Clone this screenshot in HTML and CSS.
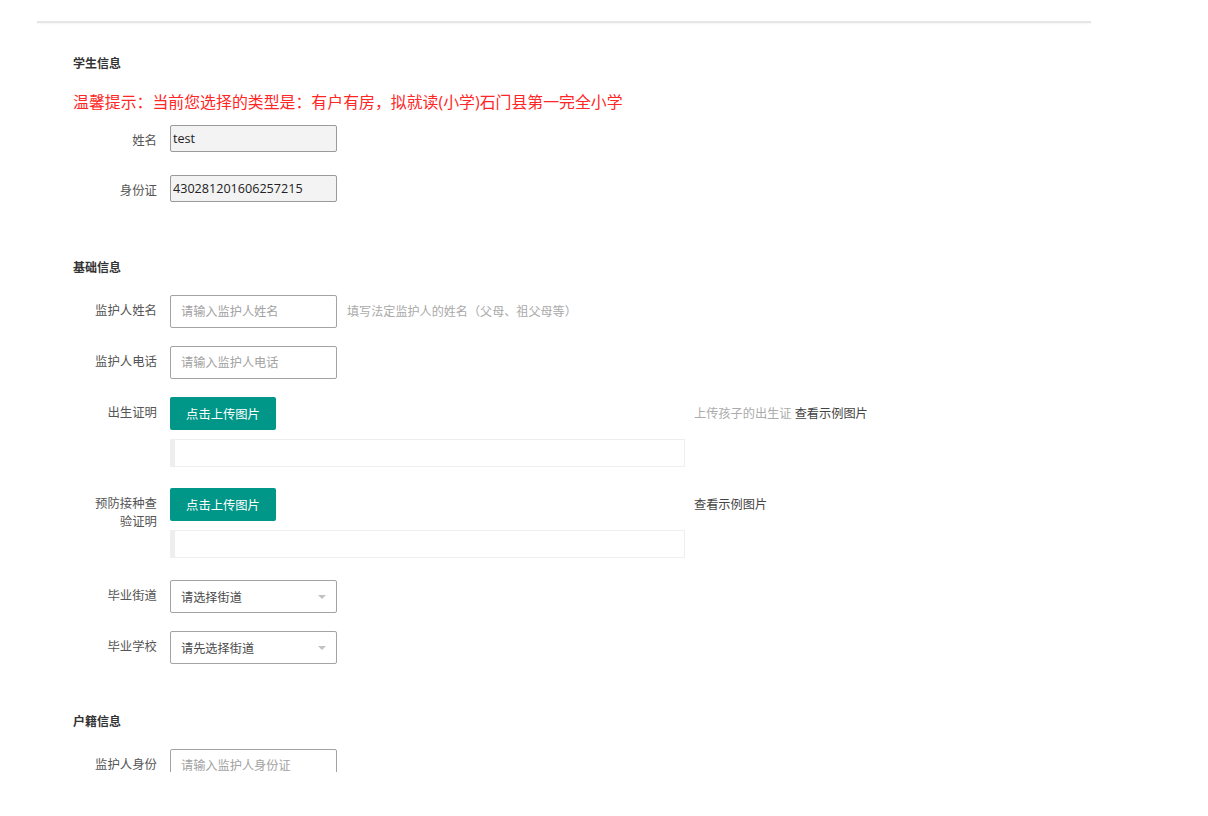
FILE: index.html
```html
<!DOCTYPE html>
<html lang="zh-CN">
<head>
<meta charset="utf-8">
<title>学生信息</title>
<link rel="stylesheet" href="styles.css">
</head>
<body>
<div class="panel">
  <div class="section-title">学生信息</div>
  <div class="tip">温馨提示：当前您选择的类型是：有户有房，拟就读(小学)石门县第一完全小学</div>

  <div class="row row-ro first-ro">
    <label class="lbl lbl-ro">姓名</label>
    <input class="ro-input" type="text" value="test" readonly>
  </div>
  <div class="row row-ro second-ro">
    <label class="lbl lbl-ro">身份证</label>
    <input class="ro-input" type="text" value="430281201606257215" readonly>
  </div>

  <div class="section-title gap-big">基础信息</div>

  <div class="row after-title">
    <label class="lbl">监护人姓名</label>
    <input class="text-input" type="text" placeholder="请输入监护人姓名">
    <span class="aux">填写法定监护人的姓名（父母、祖父母等）</span>
  </div>
  <div class="row gap-18">
    <label class="lbl">监护人电话</label>
    <input class="text-input" type="text" placeholder="请输入监护人电话">
  </div>

  <div class="row gap-18">
    <label class="lbl">出生证明</label>
    <div class="upload">
      <button class="upload-btn" type="button">点击上传图片</button>
      <div class="upload-list"></div>
    </div>
    <span class="upload-aux"><span class="muted">上传孩子的出生证</span> <span class="link">查看示例图片</span></span>
  </div>

  <div class="row gap-21">
    <label class="lbl">预防接种查验证明</label>
    <div class="upload">
      <button class="upload-btn" type="button">点击上传图片</button>
      <div class="upload-list"></div>
    </div>
    <span class="upload-aux"><span class="link">查看示例图片</span></span>
  </div>

  <div class="row gap-22">
    <label class="lbl">毕业街道</label>
    <div class="select"><span>请选择街道</span><i class="caret"></i></div>
  </div>
  <div class="row gap-18">
    <label class="lbl">毕业学校</label>
    <div class="select"><span>请先选择街道</span><i class="caret"></i></div>
  </div>

  <div class="section-title gap-48">户籍信息</div>

  <div class="row after-title">
    <label class="lbl">监护人身份</label>
    <input class="text-input" type="text" placeholder="请输入监护人身份证">
  </div>
</div>
</body>
</html>
```

FILE: styles.css
```css
html, body {
  margin: 0;
  padding: 0;
  background: #ffffff;
}

body {
  font-family: "Open Sans", "Noto Sans CJK SC", sans-serif;
  color: #333;
}

.panel {
  position: relative;
  box-sizing: border-box;
  margin: 21px 0 0 37px;
  width: 1054px;
  height: 751px;
  overflow: hidden;
  border-top: 2px solid #e6e6e6;
  padding: 31px 0 0 36px;
}

.panel::before {
  content: "";
  position: absolute;
  left: 0;
  right: 0;
  top: 0;
  height: 2px;
  background: linear-gradient(#f4f4f4, rgba(255, 255, 255, 0));
}

.section-title {
  height: 20px;
  line-height: 20px;
  font-size: 12px;
  font-weight: bold;
  color: #333;
}

.gap-big { margin-top: 56px; }
.gap-48 { margin-top: 48px; }

.tip {
  margin-top: 16px;
  line-height: 24px;
  height: 24px;
  font-size: 15.9px;
  color: #ff2626;
  white-space: nowrap;
}

.row {
  display: flex;
  align-items: flex-start;
}

.first-ro { margin-top: 11px; }
.second-ro { margin-top: 23px; }
.after-title { margin-top: 17px; }
.gap-18 { margin-top: 18px; }
.gap-21 { margin-top: 21px; }
.gap-22 { margin-top: 22px; }

.lbl {
  box-sizing: border-box;
  flex: 0 0 97px;
  width: 97px;
  padding: 7px 13px 0 15px;
  text-align: right;
  font-size: 12.4px;
  line-height: 18px;
  color: #555;
}

.lbl-ro {
  padding-top: 7px;
}

.ro-input {
  box-sizing: border-box;
  width: 167px;
  height: 27px;
  margin: 0;
  padding: 0 2px;
  border: 1px solid #9a9a9a;
  border-radius: 2px;
  background: #f3f3f3;
  font-family: "Open Sans", "Noto Sans CJK SC", sans-serif;
  font-size: 12.6px;
  color: #222;
  outline: none;
}

.text-input {
  box-sizing: border-box;
  width: 167px;
  height: 33px;
  margin: 0;
  padding: 0 10px;
  border: 1px solid #a3a3a3;
  border-radius: 2px;
  background: #fff;
  font-family: "Open Sans", "Noto Sans CJK SC", sans-serif;
  font-size: 12.2px;
  color: #333;
  outline: none;
}

.text-input::placeholder {
  color: #a2a2a2;
}

.aux {
  margin-left: 10px;
  line-height: 33px;
  font-size: 12.1px;
  color: #a9a9a9;
  white-space: nowrap;
}

.upload {
  display: flex;
  flex-direction: column;
  align-items: flex-start;
  width: 515px;
}

.upload-btn {
  box-sizing: border-box;
  width: 106px;
  height: 33px;
  margin: 0;
  padding: 0;
  border: none;
  border-radius: 2px;
  background: #009688;
  color: #fff;
  font-family: "Open Sans", "Noto Sans CJK SC", sans-serif;
  font-size: 12.3px;
  cursor: pointer;
}

.upload-list {
  box-sizing: border-box;
  margin-top: 9px;
  width: 515px;
  height: 28px;
  border: 1px solid #eeeeee;
  border-left: 5px solid #eeeeee;
  background: #fff;
}

.upload-aux {
  margin-left: 9px;
  line-height: 33px;
  font-size: 12.2px;
  white-space: nowrap;
}

.muted {
  color: #ababab;
}

.link {
  color: #444;
}

.select {
  box-sizing: border-box;
  display: flex;
  align-items: center;
  justify-content: space-between;
  width: 167px;
  height: 33px;
  padding: 0 10px 0 10px;
  border: 1px solid #a3a3a3;
  border-radius: 2px;
  background: #fff;
  font-size: 12.2px;
  color: #4a4a4a;
}

.caret {
  width: 0;
  height: 0;
  border-left: 4px solid transparent;
  border-right: 4px solid transparent;
  border-top: 4px solid #c2c2c2;
  margin-top: 1px;
}
```
